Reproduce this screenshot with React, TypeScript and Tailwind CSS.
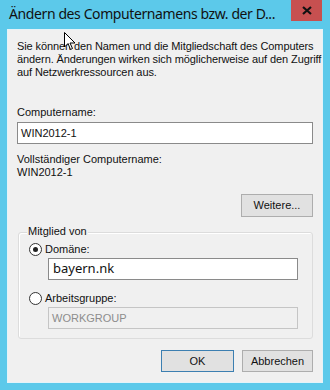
import React from "react";

export default function App() {
  const body = { fontFamily: '"Liberation Sans", Arial, sans-serif' };
  return (
    <div className="relative w-[330px] h-[390px] bg-[#5cc9ea] overflow-hidden" style={body}>
      {/* title bar */}
      <div className="flex h-[29px] items-start">
        <div
          className="flex-1 min-w-0 pl-[9px] pt-[5px] text-[14px] leading-[18px] tracking-[-0.4px] text-[#111] whitespace-nowrap"
          style={{ fontFamily: '"Noto Sans", "Open Sans", sans-serif' }}
        >
          Ändern des Computernamens bzw. der D...
        </div>
        <div className="shrink-0 ml-[4px] mr-[8px] w-[31px] h-[21px] bg-[#c75050] flex items-center justify-center">
          <svg width="10" height="9" viewBox="0 0 10 9">
            <path d="M1 1 L9 8 M9 1 L1 8" stroke="#111" strokeWidth="2.2" />
          </svg>
        </div>
      </div>
      {/* content */}
      <div className="mx-[7px] w-[316px] h-[354px] bg-[#f0f0f0] border border-[#e4f3f9] flex flex-col px-[9px] text-[11px] text-[#111]">
        <p className="mt-[10px] leading-[13px] whitespace-nowrap tracking-[-0.1px]">
          Sie können den Namen und die Mitgliedschaft des Computers
          <br />
          ändern. Änderungen wirken sich möglicherweise auf den Zugriff
          <br />
          auf Netzwerkressourcen aus.
        </p>
        <div className="mt-[27px] leading-[13px]">Computername:</div>
        <div className="mt-[3px] h-[22px] w-[296px] bg-white border border-[#8a8a8a] flex items-center pl-[3px] leading-[13px]">
          WIN2012-1
        </div>
        <div className="mt-[9px] leading-[13px]">Vollständiger Computername:</div>
        <div className="mt-[0px] leading-[13px]">WIN2012-1</div>
        <div className="mt-[15px] flex justify-end pr-[0px]">
          <div className="w-[72px] h-[23px] bg-[#e1e1e1] border border-[#adadad] flex items-center justify-center">
            Weitere...
          </div>
        </div>
        {/* group box */}
        <div className="relative mt-[15px] ml-[1px] w-[295px] h-[107px] border border-[#dcdcdc] rounded-[3px] shadow-[inset_1px_1px_0_#fff]">
          <div className="absolute left-[8px] top-[-8px] px-[1px] bg-[#f0f0f0] leading-[13px]">Mitglied von</div>
          <div className="flex flex-col pl-[10px] pt-[9px]">
            <div className="flex items-center h-[14px]">
              <span className="w-[13px] h-[13px] rounded-full border border-[#333] bg-white flex items-center justify-center">
                <span className="w-[5px] h-[5px] rounded-full bg-[#222]" />
              </span>
              <span className="ml-[3px] leading-[13px]">Domäne:</span>
            </div>
            <div
              className="mt-[2px] ml-[19px] w-[250px] h-[22px] bg-white border border-[#8a8a8a] flex items-center pl-[4px] text-[13px]"
              style={{ fontFamily: '"Noto Sans", "Open Sans", sans-serif' }}
            >
              bayern.nk
            </div>
            <div className="mt-[11px] flex items-center h-[14px]">
              <span className="w-[13px] h-[13px] rounded-full border border-[#333] bg-white" />
              <span className="ml-[3px] leading-[13px]">Arbeitsgruppe:</span>
            </div>
            <div className="mt-[2px] ml-[19px] w-[250px] h-[22px] bg-[#f0f0f0] border border-[#c5c5c5] flex items-center pl-[3px] text-[#8d8d8d] leading-[13px]">
              WORKGROUP
            </div>
          </div>
        </div>
        <div className="mt-[11px] flex justify-end gap-[8px]">
          <div className="w-[73px] h-[22px] bg-[#e1e1e1] border border-[#3c7fb1] flex items-center justify-center">OK</div>
          <div className="w-[71px] h-[22px] bg-[#e1e1e1] border border-[#adadad] flex items-center justify-center">Abbrechen</div>
        </div>
      </div>
      {/* mouse cursor */}
      <svg className="absolute left-[64px] top-[32px]" width="12" height="19" viewBox="0 0 12 19">
        <path d="M0.5 0.5 L0.5 15 L4 11.5 L6.5 17.5 L8.5 16.5 L6 11 L11 11 Z" fill="#fff" stroke="#000" strokeWidth="1" />
      </svg>
    </div>
  );
}
